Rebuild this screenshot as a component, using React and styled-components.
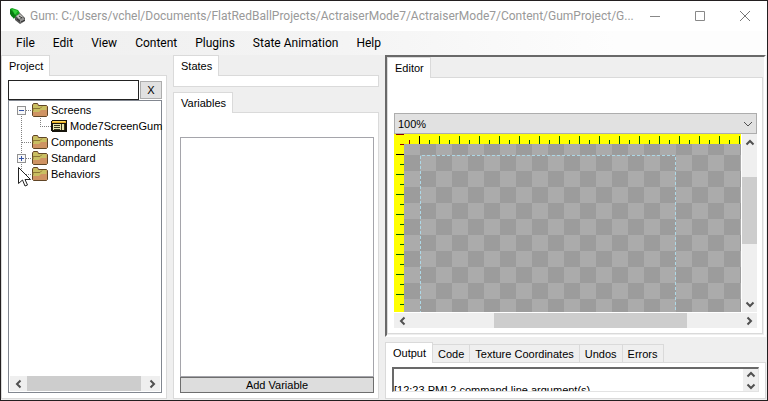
import React from "react";
import styled, { createGlobalStyle, css } from "styled-components";

const GlobalStyle = createGlobalStyle`
  * { box-sizing: border-box; }
  html, body { margin: 0; padding: 0; background: #efefef; }
  button, input, select, textarea { font: inherit; color: inherit; margin: 0; border-radius: 0; }
  svg { display: block; flex: none; }
`;

const Frame = styled.div`
  display: flex;
  flex-direction: column;
  height: 100vh;
  border: 1px solid #231f20;
  background: #efefef;
  color: #000;
  font: 11px/14px "Liberation Sans", Arial, sans-serif;
  overflow: hidden;
`;

const TitleBar = styled.header`
  display: flex;
  align-items: center;
  flex: none;
  height: 30px;
  padding-left: 8px;
  gap: 4px;
  background: #fff;
  color: #999;
  font: 12px/16px Roboto, "Segoe UI", sans-serif;
`;

const Title = styled.h1`
  flex: 1;
  min-width: 0;
  margin: 0;
  font: inherit;
  white-space: nowrap;
`;

const Caption = styled.button`
  display: grid;
  place-items: center;
  width: 45px;
  height: 30px;
  padding: 0;
  border: 0;
  background: none;
`;

const CaptionGroup = styled.div`
  display: flex;
`;

const MenuBar = styled.nav`
  display: flex;
  align-items: center;
  flex: none;
  height: 24px;
  padding-left: 6px;
  background: linear-gradient(90deg, #efefef, #f4f4f4 45%, #fdfdfd 80%);
  font: 12px/16px Roboto, "Segoe UI", sans-serif;
`;

const MenuItem = styled.button`
  padding: 0 9px;
  border: 0;
  background: none;
  white-space: nowrap;
`;

const Workspace = styled.main`
  flex: 1;
  min-height: 0;
  display: grid;
  grid-template-columns: 166px 206px minmax(0, 1fr);
  gap: 6px;
  padding: 0 1px 1px 0;
`;

const Column = styled.div`
  display: flex;
  flex-direction: column;
  min-width: 0;
  min-height: 0;
  gap: 5px;
`;

const TabPanel = styled.section`
  display: flex;
  flex-direction: column;
  min-width: 0;
  min-height: 0;
  flex: ${(p) => (p.$grow ? "1" : "none")};
`;

const TabStrip = styled.div`
  display: flex;
  align-items: flex-end;
  height: 20px;
  flex: none;
`;

const Tab = styled.button`
  height: 18px;
  padding: 0 5px;
  border: 1px solid #dadada;
  border-left-width: 0;
  border-bottom: 0;
  background: #efefef;
  white-space: nowrap;
  ${(p) =>
    p.$active &&
    css`
      height: 21px;
      margin-bottom: -1px;
      padding: 0 6px 0 7px;
      border-left-width: 1px;
      background: #fff;
      z-index: 1;
    `}
`;

const Page = styled.div`
  display: flex;
  flex-direction: column;
  flex: 1;
  min-height: 0;
  padding: ${(p) => p.$pad || "5px"};
  border: 1px solid #dadada;
  background: #fff;
`;

const SearchRow = styled.div`
  display: flex;
  align-items: center;
  gap: 1px;
  flex: none;
`;

const SearchBox = styled.input`
  flex: 1;
  min-width: 0;
  height: 20px;
  padding: 0 3px;
  border: 1px solid #222;
  background: #fff;
`;

const ClearButton = styled.button`
  width: 22px;
  height: 18px;
  padding: 0;
  border: 1px solid #adadad;
  background: #e1e1e1;
`;

const TreeBox = styled.div`
  display: flex;
  flex-direction: column;
  flex: 1;
  min-height: 0;
  padding: 1px;
  border: 1px solid #828790;
`;

const Tree = styled.ul`
  flex: 1;
  min-height: 0;
  margin: 0;
  padding: 0;
  list-style: none;
`;

const TreeRow = styled.li`
  display: flex;
  align-items: center;
  height: 16px;
  white-space: nowrap;
`;

const TreeLabel = styled.span`
  padding-left: 3px;
`;

const ScrollTrack = styled.div`
  display: flex;
  flex: none;
  flex-direction: ${(p) => (p.$vertical ? "column" : "row")};
  ${(p) => (p.$vertical ? "width: 15px;" : "height: 15px;")}
  background: #efefef;
`;

const ScrollButton = styled.button`
  display: grid;
  place-items: center;
  flex: 0 1 17px;
  min-width: 15px;
  min-height: 10px;
  padding: 0;
  border: 0;
  background: none;
`;

const ScrollSpace = styled.div`
  flex: ${(p) => p.$size} 1 0;
`;

const ScrollThumb = styled(ScrollSpace)`
  background: #cdcdcd;
`;

const VariableList = styled.div`
  flex: 1;
  border: 1px solid #a5a5ab;
  background: #fff;
`;

const AddButton = styled.button`
  flex: none;
  height: 16px;
  padding: 0;
  border: 1px solid #6e6e6e;
  background: #ddd;
  font-size: 11px;
  line-height: 14px;
`;

const EditorFrame = styled.div`
  display: flex;
  flex: 1;
  min-height: 0;
  border: 2px solid #fff;
  border-top-color: #696969;
  border-left-color: #696969;
  padding: 0 1px 1px 0;
`;

const ZoomPicker = styled.div`
  display: grid;
  align-items: center;
  height: 21px;
  flex: none;
  border: 1px solid #adadad;
  background: #e1e1e1;
  > * { grid-area: 1 / 1; }
  > svg { justify-self: end; margin-right: 3px; pointer-events: none; }
`;

const ZoomSelect = styled.select`
  appearance: none;
  width: 100%;
  height: 19px;
  padding: 0 3px;
  border: 0;
  background: none;
`;

const Viewport = styled.div`
  display: grid;
  grid-template-columns: minmax(0, 1fr) 15px;
  grid-template-rows: minmax(0, 1fr) 15px;
  gap: 1px;
  flex: 1;
  min-height: 0;
  > :last-child { grid-column: 1 / 3; }
`;

const Surface = styled.svg`
  width: 100%;
  height: 100%;
  min-height: 0;
`;

const OutputBox = styled.div`
  display: flex;
  height: 25px;
  border: 1px solid #e3e3e3;
  border-top: 2px solid #696969;
  border-left: 2px solid #696969;
  background: #fff;
`;

const OutputText = styled.textarea`
  flex: 1;
  min-width: 0;
  height: 100%;
  padding: 0;
  border: 0;
  background: none;
  resize: none;
  overflow: hidden;
  line-height: 14px;
`;

const Pointer = styled.svg`
  position: absolute;
  left: 18px;
  top: 167px;
  pointer-events: none;
`;

const chevrons = {
  left: "M6.5 1.5 3 5l3.5 3.5",
  right: "M3.5 1.5 7 5 3.5 8.5",
  up: "M1.5 6.5 5 3l3.5 3.5",
  down: "M1.5 3.5 5 7l3.5-3.5",
};

const Chevron = ({ dir, thin }) => (
  <svg width="10" height="10" viewBox="0 0 10 10">
    <path
      d={thin ? "M1 3l4 4 4-4" : chevrons[dir]}
      fill="none"
      stroke="#505050"
      strokeWidth={thin ? 1 : 2}
    />
  </svg>
);

function ScrollBar({ vertical, before, thumb, after, label }) {
  return (
    <ScrollTrack $vertical={vertical} role="group" aria-label={label}>
      <ScrollButton aria-label={vertical ? "Scroll up" : "Scroll left"}>
        <Chevron dir={vertical ? "up" : "left"} />
      </ScrollButton>
      <ScrollSpace $size={before} />
      <ScrollThumb $size={thumb} />
      <ScrollSpace $size={after} />
      <ScrollButton aria-label={vertical ? "Scroll down" : "Scroll right"}>
        <Chevron dir={vertical ? "down" : "right"} />
      </ScrollButton>
    </ScrollTrack>
  );
}

const Logo = () => (
  <svg width="17" height="17" viewBox="0 0 17 17">
    <path d="M1 1 3 0l6 2 2 3-5 5-4-2Z" fill="#16a51e" />
    <path d="M1 1v5l4 5 2-4Z" fill="#087b12" />
    <path d="m3 1 6 2-3 4Z" fill="#35cf3b" />
    <path d="m6 9 5-4 5 5v3l-5 3-5-4Z" fill="#555" />
    <path d="m7 8 4-2 3 3-4 2Z" fill="#c4c4bf" />
    <path d="m10 12 4-3 2 3-4 3Z" fill="#949494" />
    <path d="m8 11 3 2m-1-5 3 2m-1 4 4-2" stroke="#282828" fill="none" />
  </svg>
);

const Folder = () => (
  <svg width="16" height="16" viewBox="0 0 16 16">
    <path d="M.5 13.500V3l1-1.500h4l1 2h8l1 1v9l-1 1H1.500Z" fill="#cf9363" stroke="#5f4526" />
    <path d="M1 3.500 2 2h3l1 2h8.500V8H9l-2 2H1Z" fill="#c9bf62" />
    <path d="M1 9V6.500h7l2-2" fill="none" stroke="#8c7636" />
  </svg>
);

const ScreenIcon = () => (
  <svg width="16" height="16" viewBox="0 0 16 16" shapeRendering="crispEdges">
    <path d="M1 2h14l1 1v10l-1 1H1l-1-1V3Z" fill="#17150c" />
    <path d="M1 3h14v2H1Z" fill="#e6ad22" />
    <path d="M2 3h12v1H2Z" fill="#ffdc66" />
    <path d="M2 6h12v6H2Z" fill="#e8e6ae" />
    <path d="M3 7h6v1H3Zm0 2h6v1H3Zm0 2h6v1H3Z" fill="#38351c" />
    <path d="M10 6h1v6h-1Zm3 0h1v6h-1Z" fill="#38351c" />
  </svg>
);

const dots = { stroke: "#808080", strokeDasharray: "1 1", fill: "none", shapeRendering: "crispEdges" };

function Branch({ sign, first, last, child }) {
  const width = child ? 41 : 22;
  return (
    <svg width={width} height="16" viewBox={`0 0 ${width} 16`}>
      <path d={`M11.5 ${first ? 8 : 0}V${last ? 8 : 16}`} {...dots} />
      <path d={child ? "M30.5 0V8.5H41" : "M12 8.5H22"} {...dots} />
      {sign && (
        <g shapeRendering="crispEdges">
          <rect x="7.5" y="4.5" width="8" height="8" fill="#f8f8f8" stroke="#919191" />
          <path d={sign === "+" ? "M9 8.5h5M11.5 6v5" : "M9 8.5h5"} stroke="#3653a5" />
        </g>
      )}
    </svg>
  );
}

const nodes = [
  { label: "Screens", sign: "-", first: true },
  { label: "Mode7ScreenGum", child: true },
  { label: "Components" },
  { label: "Standard", sign: "+" },
  { label: "Behaviors", last: true },
];

const ORIGIN = 25;
const steps = (from, to) => Array.from({ length: to - from + 1 }, (_, i) => i + from);
const tickColor = (n) => (n < 0 ? "#8b0000" : n === 0 ? "#000" : "#006400");
const tickStart = (n) => (n % 2 === 0 ? 2 : 6);

function EditorSurface() {
  return (
    <Surface shapeRendering="crispEdges" role="img" aria-label="Screen canvas">
      <defs>
        <pattern id="checker" x="26" y="21" width="32" height="32" patternUnits="userSpaceOnUse">
          <rect width="32" height="32" fill="#ababab" />
          <path d="M16 0h16v16H16ZM0 16h16v16H0Z" fill="#9c9c9c" />
        </pattern>
      </defs>
      <rect width="100%" height="100%" fill="url(#checker)" />
      <path d="M26.5 2000V21.5H281.5V2000" fill="none" stroke="#add8e6" strokeDasharray="3 2" />
      <rect width="100%" height="10" fill="#ff0" />
      <rect width="10" height="100%" fill="#ff0" />
      {steps(-1, 190).map((n) => (
        <rect key={n} x={ORIGIN + n * 10} y={tickStart(n)} width="1" height={10 - tickStart(n)} fill={tickColor(n)} />
      ))}
      {steps(-2, 120).map((n) => (
        <rect key={n} x={tickStart(n)} y={20 + n * 10} width={10 - tickStart(n)} height="1" fill={tickColor(n)} />
      ))}
    </Surface>
  );
}

export default function App() {
  return (
    <Frame>
      <GlobalStyle />
      <TitleBar>
        <Logo />
        <Title>
          Gum: C:/Users/vchel/Documents/FlatRedBallProjects/ActraiserMode7/ActraiserMode7/Content/GumProject/G...
        </Title>
        <CaptionGroup>
          <Caption aria-label="Minimize">
            <svg width="10" height="10"><path d="M0 5.5h10" stroke="#888" /></svg>
          </Caption>
          <Caption aria-label="Maximize">
            <svg width="10" height="10"><path d="M.5.5h9v9h-9Z" fill="none" stroke="#888" /></svg>
          </Caption>
          <Caption aria-label="Close">
            <svg width="10" height="10"><path d="m0 0 10 10M10 0 0 10" stroke="#777" /></svg>
          </Caption>
        </CaptionGroup>
      </TitleBar>
      <MenuBar>
        {["File", "Edit", "View", "Content", "Plugins", "State Animation", "Help"].map((m) => (
          <MenuItem key={m}>{m}</MenuItem>
        ))}
      </MenuBar>
      <Workspace>
        <TabPanel $grow>
          <TabStrip><Tab $active>Project</Tab></TabStrip>
          <Page $pad="4px 4px 5px 6px">
            <SearchRow>
              <SearchBox aria-label="Search project" />
              <ClearButton aria-label="Clear search">X</ClearButton>
            </SearchRow>
            <TreeBox>
              <Tree>
                {nodes.map(({ label, ...line }) => (
                  <TreeRow key={label}>
                    <Branch {...line} />
                    {line.child ? <ScreenIcon /> : <Folder />}
                    <TreeLabel>{label}</TreeLabel>
                  </TreeRow>
                ))}
              </Tree>
              <ScrollBar label="Project scroll" before={0} thumb={114} after={2} />
            </TreeBox>
          </Page>
        </TabPanel>

        <Column>
          <TabPanel>
            <TabStrip><Tab $active>States</Tab></TabStrip>
            <Page />
          </TabPanel>
          <TabPanel $grow>
            <TabStrip><Tab $active>Variables</Tab></TabStrip>
            <Page $pad="24px 4px 5px 6px">
              <VariableList />
              <AddButton>Add Variable</AddButton>
            </Page>
          </TabPanel>
        </Column>

        <Column>
          <EditorFrame>
            <TabPanel $grow>
              <TabStrip><Tab $active>Editor</Tab></TabStrip>
              <Page $pad="35px 5px 5px 6px">
                <ZoomPicker>
                  <ZoomSelect aria-label="Zoom"><option>100%</option></ZoomSelect>
                  <Chevron dir="down" thin />
                </ZoomPicker>
                <Viewport>
                  <EditorSurface />
                  <ScrollBar vertical label="Vertical scroll" before={26} thumb={67} after={51} />
                  <ScrollBar label="Horizontal scroll" before={83} thumb={193} after={53} />
                </Viewport>
              </Page>
            </TabPanel>
          </EditorFrame>
          <TabPanel>
            <TabStrip>
              <Tab $active>Output</Tab>
              {["Code", "Texture Coordinates", "Undos", "Errors"].map((t) => (
                <Tab key={t}>{t}</Tab>
              ))}
            </TabStrip>
            <Page $pad="4px 6px 6px">
              <OutputBox>
                <OutputText aria-label="Output log" readOnly rows={1} defaultValue={"\n[12:23 PM] 2 command line argument(s)"} />
                <ScrollBar vertical label="Output scroll" before={0} thumb={0} after={0} />
              </OutputBox>
            </Page>
          </TabPanel>
        </Column>
      </Workspace>
      <Pointer width="13" height="20" viewBox="0 0 13 20">
        <path d="M.5.5v16l4-3.500 2.500 6 2.500-1-2.500-5.500h5.500Z" fill="#fff" stroke="#222" />
      </Pointer>
    </Frame>
  );
}
